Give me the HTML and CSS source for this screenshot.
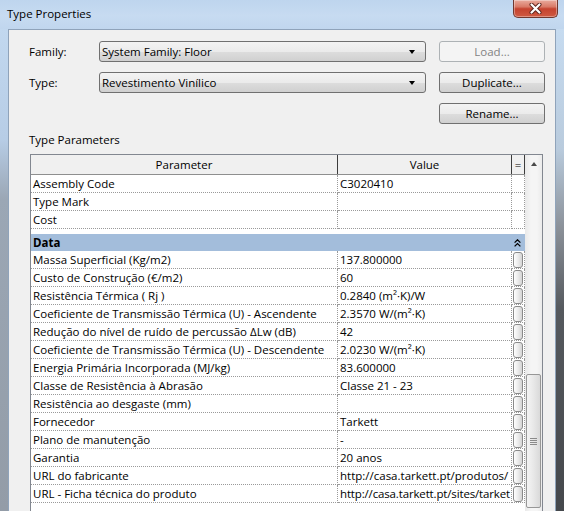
FILE: index.html
```html
<!DOCTYPE html>
<html>
<head>
<meta charset="utf-8">
<title>Type Properties</title>
<link rel="stylesheet" href="styles.css">
</head>
<body>
<div class="window">
  <div class="titlebar">
    <span class="title">Type Properties</span>
    <div class="close">
      <svg width="13" height="11" viewBox="0 0 13 11">
        <path d="M2.5 1.5 L10.5 9.5 M10.5 1.5 L2.5 9.5" stroke="#5a241c" stroke-width="4" stroke-linecap="round"/>
        <path d="M2.5 1.5 L10.5 9.5 M10.5 1.5 L2.5 9.5" stroke="#ffffff" stroke-width="2.2" stroke-linecap="round"/>
      </svg>
    </div>
  </div>
  <div class="main">
    <div class="frame-left"></div>
    <div class="client">
      <div class="form">
        <span class="lbl">Family:</span>
        <div class="combo"><span>System Family: Floor</span><span class="arrow"></span></div>
        <button class="btn disabled">Load...</button>
        <span class="lbl">Type:</span>
        <div class="combo"><span>Revestimento Vinílico</span><span class="arrow"></span></div>
        <button class="btn">Duplicate...</button>
        <span></span>
        <span></span>
        <button class="btn">Rename...</button>
      </div>
      <div class="section-label">Type Parameters</div>
      <div class="table">
        <div class="grid">
          <div class="hrow">
            <div class="hcell">Parameter</div>
            <div class="hcell">Value</div>
            <div class="hcell">=</div>
          </div>
          <div class="row"><div>Assembly Code</div><div>C3020410</div><div></div></div>
          <div class="row"><div>Type Mark</div><div></div><div></div></div>
          <div class="row"><div>Cost</div><div></div><div></div></div>
          <div class="gap"></div>
          <div class="group">
            <span>Data</span>
            <span class="chev">
              <svg width="7" height="8" viewBox="0 0 7 8">
                <path d="M0.6 3.6 L3.5 0.8 L6.4 3.6 M0.6 7.4 L3.5 4.6 L6.4 7.4" fill="none" stroke="#000" stroke-width="1.3"/>
              </svg>
            </span>
          </div>
          <div class="row"><div>Massa Superficial (Kg/m2)</div><div>137.800000</div><div class="eq"><span class="pbtn"></span></div></div>
          <div class="row"><div>Custo de Construção (€/m2)</div><div>60</div><div class="eq"><span class="pbtn"></span></div></div>
          <div class="row"><div>Resistência Térmica ( Rj )</div><div>0.2840 (m²·K)/W</div><div class="eq"><span class="pbtn"></span></div></div>
          <div class="row"><div>Coeficiente de Transmissão Térmica (U) - Ascendente</div><div>2.3570 W/(m²·K)</div><div class="eq"><span class="pbtn"></span></div></div>
          <div class="row"><div>Redução do nível de ruído de percussão ΔLw (dB)</div><div>42</div><div class="eq"><span class="pbtn"></span></div></div>
          <div class="row"><div>Coeficiente de Transmissão Térmica (U) - Descendente</div><div>2.0230 W/(m²·K)</div><div class="eq"><span class="pbtn"></span></div></div>
          <div class="row"><div>Energia Primária Incorporada (MJ/kg)</div><div>83.600000</div><div class="eq"><span class="pbtn"></span></div></div>
          <div class="row"><div>Classe de Resistência à Abrasão</div><div>Classe 21 - 23</div><div class="eq"><span class="pbtn"></span></div></div>
          <div class="row"><div>Resistência ao desgaste (mm)</div><div></div><div class="eq"><span class="pbtn"></span></div></div>
          <div class="row"><div>Fornecedor</div><div>Tarkett</div><div class="eq"><span class="pbtn"></span></div></div>
          <div class="row"><div>Plano de manutenção</div><div>-</div><div class="eq"><span class="pbtn"></span></div></div>
          <div class="row"><div>Garantia</div><div>20 anos</div><div class="eq"><span class="pbtn"></span></div></div>
          <div class="row"><div>URL do fabricante</div><div>http://casa.tarkett.pt/produtos/</div><div class="eq"><span class="pbtn"></span></div></div>
          <div class="row"><div>URL - Ficha técnica do produto</div><div class="tight">http://casa.tarkett.pt/sites/tarket</div><div class="eq"><span class="pbtn"></span></div></div>
        </div>
        <div class="scrollbar">
          <div class="sb-up"><span class="up-arrow"></span></div>
          <div class="thumb">
            <svg width="7" height="7" viewBox="0 0 7 7">
              <path d="M0 0.5 H7 M0 2.5 H7 M0 4.5 H7 M0 6.5 H7" stroke="#8a8a8a" stroke-width="1"/>
            </svg>
          </div>
        </div>
      </div>
    </div>
    <div class="frame-right"></div>
  </div>
</div>
</body>
</html>
```

FILE: styles.css
```css
* { box-sizing: border-box; }
html, body { margin: 0; padding: 0; }
body {
  font-family: "Open Sans", "Noto Sans", sans-serif;
  font-size: 11.5px;
  color: #000;
  background: #fff;
}
.window {
  width: 564px;
  height: 511px;
  overflow: hidden;
  display: flex;
  flex-direction: column;
}
.titlebar {
  height: 29px;
  flex: none;
  display: flex;
  justify-content: space-between;
  align-items: flex-start;
  background: linear-gradient(180deg, #bed5ee 0%, #c7dbf1 55%, #c0d6ee 100%);
}
.title {
  margin: 6px 0 0 7px;
  line-height: 16px;
}
.close {
  width: 45px;
  height: 18px;
  margin-right: 6px;
  border: 1px solid #70382f;
  border-top: none;
  border-radius: 0 0 5px 5px;
  background: linear-gradient(180deg, #e9ab9d 0%, #d97a67 40%, #c5432f 52%, #cf5a42 100%);
  box-shadow: inset 0 0 0 1px rgba(255, 255, 255, 0.35);
  display: flex;
  align-items: center;
  justify-content: center;
}
.main {
  flex: 1;
  min-height: 0;
  display: grid;
  grid-template-columns: 8px 548px 8px;
}
.frame-left {
  background: linear-gradient(180deg, #c2d8ef 0px, #b7cde6 110px, #9ba7b5 170px, #939ca7 100%);
}
.frame-right {
  background: linear-gradient(180deg, #c6dbf0 0px, #b9cbdd 120px, #8a9098 200px, #55595e 280px, #45484c 100%);
}
.client {
  background: #f0f0f0;
  border: 1px solid #8fa3ba;
  border-bottom: none;
  overflow: hidden;
  padding: 11px 0 0 20px;
}
.form {
  display: grid;
  grid-template-columns: 57px 327px 106px;
  grid-auto-rows: 21px;
  column-gap: 13px;
  row-gap: 10px;
}
.lbl {
  display: flex;
  align-items: center;
}
.combo {
  display: flex;
  align-items: center;
  padding-left: 2px;
  border: 1px solid #707070;
  border-radius: 3px;
  background: linear-gradient(180deg, #f3f3f3 0%, #ebebeb 50%, #dddddd 51%, #d0d0d0 100%);
  white-space: nowrap;
}
.arrow {
  margin-left: auto;
  margin-right: 10px;
  width: 0;
  height: 0;
  border-left: 3.5px solid transparent;
  border-right: 3.5px solid transparent;
  border-top: 4px solid #000;
}
.btn {
  appearance: none;
  font: inherit;
  color: #000;
  padding: 0;
  margin: 0;
  border: 1px solid #707070;
  border-radius: 3px;
  background: linear-gradient(180deg, #f3f3f3 0%, #ebebeb 50%, #dddddd 51%, #d0d0d0 100%);
  display: flex;
  align-items: center;
  justify-content: center;
}
.btn.disabled {
  border-color: #adb2b5;
  background: #f4f4f4;
  color: #838383;
}
.section-label {
  margin-top: 8px;
  line-height: 16px;
}
.table {
  margin-top: 6px;
  margin-left: 1px;
  width: 513px;
  height: 420px;
  border: 1px solid #828790;
  background: #fff;
  display: flex;
}
.grid {
  width: 494px;
  flex: none;
}
.hrow {
  display: grid;
  grid-template-columns: 307px 174px 13px;
  height: 20px;
  background: #f0f0f0;
  border-bottom: 1px solid #8e8f8f;
}
.hcell {
  display: flex;
  align-items: center;
  justify-content: center;
  border-right: 1px solid #3c3c3c;
}
.row {
  display: grid;
  grid-template-columns: 307px 174px 13px;
  height: 18px;
}
.row > div {
  border-bottom: 1px dotted #9a9a9a;
  border-right: 1px dotted #9a9a9a;
  padding-left: 2px;
  line-height: 17px;
  white-space: nowrap;
  overflow: hidden;
}
.row > div.tight {
  letter-spacing: -0.15px;
}
.row > div.eq {
  padding: 0;
  display: flex;
  align-items: center;
  justify-content: center;
}
.pbtn {
  display: block;
  width: 10px;
  height: 16px;
  border: 1px solid #8a8a8a;
  border-radius: 3px;
  background: linear-gradient(90deg, #ffffff 0%, #ececec 50%, #d4d4d4 100%);
}
.gap {
  height: 5px;
}
.group {
  height: 17px;
  background: #a3bddb;
  font-weight: bold;
  padding-left: 2px;
  display: flex;
  align-items: center;
  justify-content: space-between;
}
.chev {
  width: 13px;
  margin-right: 1px;
  display: flex;
  justify-content: center;
}
.scrollbar {
  width: 17px;
  flex: none;
  background: linear-gradient(90deg, #e9e9e9 0%, #f5f5f5 35%, #f5f5f5 70%, #ebebeb 100%);
  display: flex;
  flex-direction: column;
  align-items: center;
}
.sb-up {
  width: 17px;
  height: 17px;
  flex: none;
  display: flex;
  align-items: center;
  justify-content: center;
}
.up-arrow {
  width: 0;
  height: 0;
  border-left: 3.5px solid transparent;
  border-right: 3.5px solid transparent;
  border-bottom: 4px solid #4a4a4a;
}
.thumb {
  margin-top: 202px;
  width: 15px;
  height: 134px;
  flex: none;
  border: 1px solid #979797;
  border-radius: 2px;
  background: linear-gradient(90deg, #f4f4f4 0%, #e8e8e8 50%, #d9d9d9 100%);
  display: flex;
  align-items: center;
  justify-content: center;
}
```
